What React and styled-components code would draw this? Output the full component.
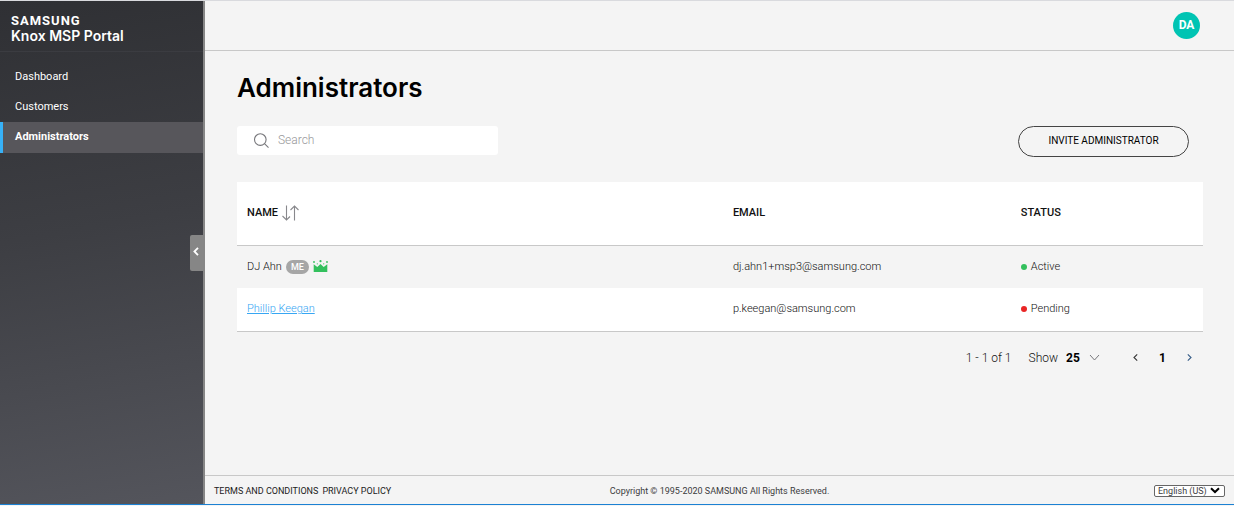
import React from "react";
import styled, { createGlobalStyle } from "styled-components";

const sans = '"Roboto", "Liberation Sans", sans-serif';
const display = '"Inter", "Liberation Sans", sans-serif';

const GlobalStyle = createGlobalStyle`
  *, *::before, *::after { box-sizing: border-box; }
  body { margin: 0; background: #f4f4f4; font: 11px/16px ${sans}; color: #3c3c40; }
  button, input, select { font: inherit; color: inherit; }
  a { color: inherit; text-decoration: none; }
`;

const Shell = styled.div`
  display: flex;
  min-height: calc(100vh - 1px);
  border-top: 1px solid #d9dade;
  border-bottom: 1px solid #1b81d3;
`;

const Sidebar = styled.aside`
  position: relative;
  flex: none;
  width: 205px;
  border-right: 2px solid #868686;
  background: linear-gradient(170deg, #2f3034, #3d3e43 45%, #54555c);
  color: #fff;
`;

const Brand = styled.div`
  height: 51px;
  padding: 12px 11px 0;
  border-bottom: 1px solid #3b3c41;
`;

const BrandMark = styled.div`
  font-size: 13px;
  line-height: 15px;
  font-weight: 700;
  letter-spacing: 1px;
`;

const BrandName = styled.div`
  font-family: ${display};
  font-size: 14px;
  line-height: 16px;
  font-weight: 600;
`;

const Nav = styled.nav`
  display: flex;
  flex-direction: column;
  padding-top: 10px;
`;

const NavLink = styled.a`
  height: ${(p) => (p.$active ? 31 : 30)}px;
  padding-left: 12px;
  border-left: 3px solid ${(p) => (p.$active ? "#37b1f7" : "transparent")};
  background: ${(p) => (p.$active ? "#57565b" : "transparent")};
  line-height: 29px;
  font-weight: ${(p) => (p.$active ? 700 : 400)};
`;

const Collapse = styled.button`
  position: absolute;
  top: 234px;
  right: 0;
  display: flex;
  align-items: center;
  justify-content: center;
  width: 13px;
  height: 36px;
  padding: 0 2px 3px 0;
  border: 0;
  border-radius: 2px 0 0 2px;
  background: #868686;
  color: #fff;
`;

const Content = styled.div`
  flex: 1;
  min-width: 0;
  display: flex;
  flex-direction: column;
`;

const TopBar = styled.header`
  display: flex;
  align-items: center;
  justify-content: flex-end;
  height: 50px;
  padding-right: 34px;
  border-bottom: 1px solid #c8c8c8;
`;

const Avatar = styled.button`
  width: 27px;
  height: 27px;
  padding: 0 0 1px;
  border: 0;
  border-radius: 50%;
  background: #00c4b3;
  color: #fff;
  font-size: 12px;
  font-weight: 700;
`;

const Main = styled.main`
  flex: 1;
  padding: 21px 31px 24px 32px;
`;

const Title = styled.h1`
  margin: 0 0 22px;
  font: 600 26px/32px ${display};
  color: #000;
`;

const Toolbar = styled.div`
  display: flex;
  align-items: flex-start;
  justify-content: space-between;
  margin-bottom: 25px;
  padding-right: 14px;
`;

const SearchBox = styled.label`
  display: flex;
  align-items: center;
  gap: 8px;
  width: 261px;
  height: 29px;
  padding: 0 16px;
  border-radius: 3px;
  background: #fff;
  color: #77777b;
`;

const SearchInput = styled.input`
  flex: 1;
  min-width: 0;
  padding: 0 0 2px;
  border: 0;
  outline: 0;
  background: transparent;
  font-size: 12px;
  &::placeholder { color: #98989a; font-weight: 300; opacity: 1; }
`;

const InviteButton = styled.button`
  width: 171px;
  height: 31px;
  padding: 0 0 2px;
  border: 1px solid #444;
  border-radius: 16px;
  background: transparent;
  color: #000;
  font-size: 10px;
`;

const Table = styled.table`
  width: 100%;
  table-layout: fixed;
  border-collapse: collapse;
  background: #fff;
  text-align: left;
`;

const HeadCell = styled.th`
  width: ${(p) => p.$width};
  height: 63px;
  padding: 0 10px;
  border-bottom: 1px solid #c8c8c8;
  color: #111;
  font-weight: 500;
`;

const Row = styled.tr`
  height: 43px;
  &:nth-child(odd) { background: #f4f4f4; }
  &:last-child { border-bottom: 1px solid #c8c8c8; }
`;

const Cell = styled.td`
  padding: 0 10px;
  font-weight: 300;
  color: #111;
`;

const Inline = styled.span`
  display: flex;
  align-items: center;
  gap: 4px;
`;

const SortButton = styled.button`
  display: flex;
  padding: 0;
  border: 0;
  background: none;
  color: #88888c;
`;

const MeBadge = styled.span`
  width: 23px;
  height: 14px;
  border-radius: 7px;
  background: #a6a6a6;
  color: #fff;
  font-size: 9px;
  line-height: 14px;
  font-weight: 500;
  text-align: center;
`;

const NameLink = styled.a`
  color: #37a6f3;
  text-decoration: underline;
`;

const Dot = styled.span`
  width: 6px;
  height: 6px;
  border-radius: 50%;
  background: ${(p) => p.$color};
`;

const Pager = styled.div`
  display: flex;
  align-items: center;
  justify-content: flex-end;
  gap: 17px;
  padding: 18px 9px 0 0;
  color: #111;
  font-size: 12px;
  font-weight: 300;
`;

const PageSize = styled.label`
  display: flex;
  align-items: center;
  gap: 8px;
`;

const SizeSelect = styled.span`
  display: grid;
  align-items: center;
  width: 34px;
  color: #77777b;
  & > * { grid-area: 1 / 1; }
  & > svg { justify-self: end; pointer-events: none; }
`;

const BareSelect = styled.select`
  width: 100%;
  padding: 0;
  border: 0;
  appearance: none;
  background: transparent;
  color: #000;
  font-weight: 700;
`;

const Pages = styled.nav`
  display: flex;
  align-items: center;
  gap: 18px;
  margin-left: 14px;
`;

const PageButton = styled.button`
  display: flex;
  justify-content: center;
  width: 9px;
  padding: 0;
  border: 0;
  background: none;
  color: ${(p) => p.$color || "#000"};
  font-weight: 700;
`;

const Footer = styled.footer`
  display: grid;
  grid-template-columns: 1fr auto 1fr;
  align-items: center;
  height: 29px;
  padding: 1px 9px 0;
  border-top: 1px solid #c8c8c8;
  font-size: 9px;
`;

const FooterLinks = styled.div`
  display: flex;
  gap: 4px;
  color: #222;
`;

const LanguageBox = styled.span`
  justify-self: end;
  display: grid;
  align-items: center;
  width: 71px;
  height: 12px;
  border: 1px solid #666;
  border-radius: 2px;
  background: #fff;
  & > * { grid-area: 1 / 1; }
  & > svg { justify-self: end; margin-right: 4px; color: #000; pointer-events: none; }
`;

const LanguageSelect = styled.select`
  width: 100%;
  height: 10px;
  padding: 0 0 0 3px;
  border: 0;
  appearance: none;
  background: transparent;
  line-height: 10px;
`;

const Chevron = ({ w, h, d, stroke = 1 }) => (
  <svg width={w} height={h} viewBox={`0 0 ${w} ${h}`} fill="none" stroke="currentColor" strokeWidth={stroke} aria-hidden="true">
    <path d={d} />
  </svg>
);

const SearchIcon = () => (
  <svg width="17" height="17" viewBox="0 0 17 17" fill="none" stroke="currentColor" strokeWidth="1.1" aria-hidden="true">
    <circle cx="7.3" cy="7.6" r="5.8" />
    <path d="M11.5 11.7L15.5 15.6" />
  </svg>
);

const SortIcon = () => (
  <svg width="17" height="16" viewBox="0 0 17 16" fill="none" stroke="currentColor" strokeWidth="1.1" aria-hidden="true">
    <path d="M4.5 .5V15M.5 11L4.5 15L8 11.5M12.5 15.5V1M8.5 5L12.5 1L16.5 5" />
  </svg>
);

const CrownIcon = () => (
  <svg width="15" height="14" viewBox="0 0 15 14" fill="#33c05d" role="img" aria-label="Owner">
    <path d="M.7 12V4.3L4.3 7L7.5 4L10.7 7L14.3 4.3V12Z" />
    <circle cx="1" cy="2" r=".9" />
    <circle cx="4.3" cy="3.8" r=".6" />
    <circle cx="7.5" cy="1.2" r="1.1" />
    <circle cx="10.7" cy="3.8" r=".6" />
    <circle cx="14" cy="2" r=".9" />
  </svg>
);

const people = [
  { name: "DJ Ahn", me: true, email: "dj.ahn1+msp3@samsung.com", status: "Active", color: "#33c05d" },
  { name: "Phillip Keegan", email: "p.keegan@samsung.com", status: "Pending", color: "#e92525" },
];

export default function App() {
  return (
    <>
      <GlobalStyle />
      <Shell>
        <Sidebar>
          <Brand>
            <BrandMark>SAMSUNG</BrandMark>
            <BrandName>Knox MSP Portal</BrandName>
          </Brand>
          <Nav>
            <NavLink href="#dashboard">Dashboard</NavLink>
            <NavLink href="#customers">Customers</NavLink>
            <NavLink href="#administrators" $active aria-current="page">Administrators</NavLink>
          </Nav>
          <Collapse aria-label="Collapse sidebar">
            <Chevron w={6} h={9} d="M5 .8L1.4 4.5L5 8.2" stroke={1.8} />
          </Collapse>
        </Sidebar>
        <Content>
          <TopBar>
            <Avatar>DA</Avatar>
          </TopBar>
          <Main>
            <Title>Administrators</Title>
            <Toolbar>
              <SearchBox>
                <SearchIcon />
                <SearchInput type="text" placeholder="Search" aria-label="Search" />
              </SearchBox>
              <InviteButton>INVITE ADMINISTRATOR</InviteButton>
            </Toolbar>
            <Table>
              <thead>
                <tr>
                  <HeadCell $width="50.3%">
                    <Inline>
                      NAME
                      <SortButton aria-label="Sort by name"><SortIcon /></SortButton>
                    </Inline>
                  </HeadCell>
                  <HeadCell $width="29.8%">EMAIL</HeadCell>
                  <HeadCell>STATUS</HeadCell>
                </tr>
              </thead>
              <tbody>
                {people.map((p) => (
                  <Row key={p.email}>
                    <Cell>
                      {p.me ? (
                        <Inline>
                          {p.name}
                          <MeBadge>ME</MeBadge>
                          <CrownIcon />
                        </Inline>
                      ) : (
                        <NameLink href="#profile">{p.name}</NameLink>
                      )}
                    </Cell>
                    <Cell>{p.email}</Cell>
                    <Cell>
                      <Inline>
                        <Dot $color={p.color} />
                        {p.status}
                      </Inline>
                    </Cell>
                  </Row>
                ))}
              </tbody>
            </Table>
            <Pager>
              <span>1 - 1 of 1</span>
              <PageSize>
                Show
                <SizeSelect>
                  <BareSelect defaultValue="25">
                    <option>25</option>
                    <option>50</option>
                  </BareSelect>
                  <Chevron w={11} h={7} d="M1 1L5.5 6L10 1" />
                </SizeSelect>
              </PageSize>
              <Pages aria-label="Pagination">
                <PageButton aria-label="Previous page" $color="#333">
                  <Chevron w={5} h={7} d="M4.2 .4L1 3.5L4.2 6.6" stroke={1.1} />
                </PageButton>
                <PageButton>1</PageButton>
                <PageButton aria-label="Next page" $color="#335a86">
                  <Chevron w={5} h={7} d="M.8 .4L4 3.5L.8 6.6" stroke={1.1} />
                </PageButton>
              </Pages>
            </Pager>
          </Main>
          <Footer>
            <FooterLinks>
              <a href="#terms">TERMS AND CONDITIONS</a>
              <a href="#privacy">PRIVACY POLICY</a>
            </FooterLinks>
            <span>Copyright © 1995-2020 SAMSUNG All Rights Reserved.</span>
            <LanguageBox>
              <LanguageSelect aria-label="Language" defaultValue="English (US)">
                <option>English (US)</option>
              </LanguageSelect>
              <Chevron w={10} h={7} d="M1 1.2L5 5L9 1.2" stroke={2} />
            </LanguageBox>
          </Footer>
        </Content>
      </Shell>
    </>
  );
}
